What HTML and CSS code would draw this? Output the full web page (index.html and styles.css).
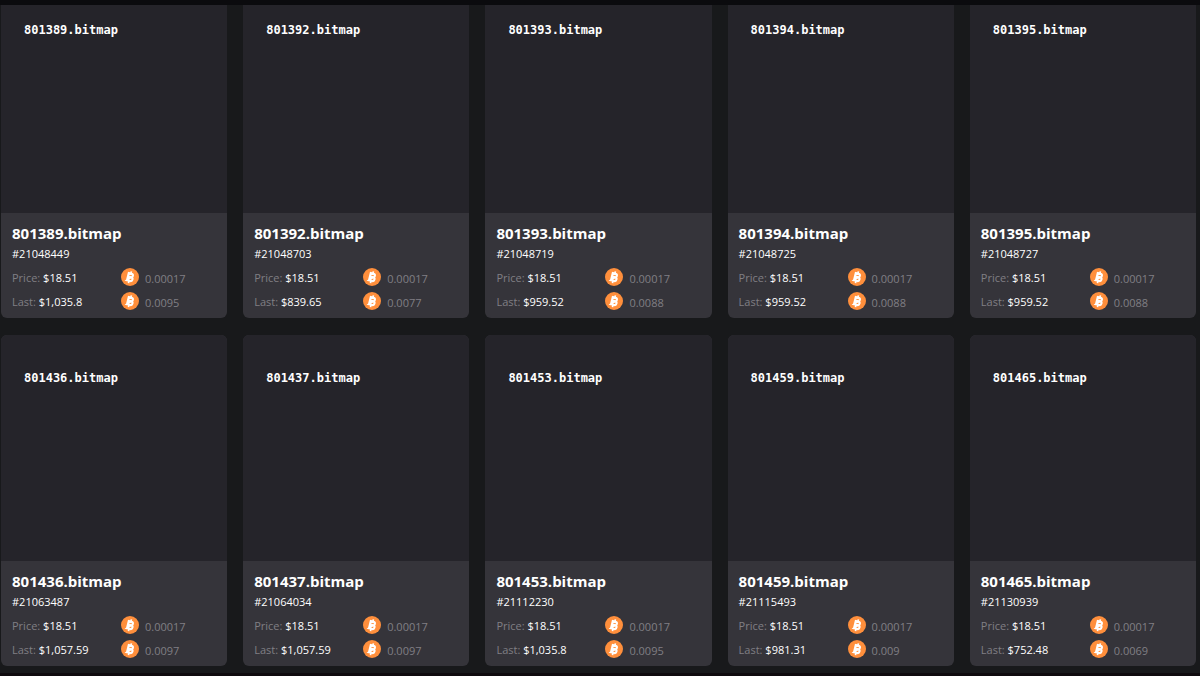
FILE: index.html
```html
<!DOCTYPE html>
<html lang="en">
<head>
  <meta charset="UTF-8">
  <meta name="viewport" content="width=device-width, initial-scale=1.0">
  <title>Bitmap Market</title>
  <link rel="stylesheet" href="styles.css">
</head>
<body>
  <header class="topbar"></header>

  <!-- Coin icon shared by all price rows -->
  <svg class="sprite" aria-hidden="true">
    <symbol id="btc" viewBox="0 0 34 34">
      <circle cx="17" cy="17" r="17" fill="#ff8f3c"/>
      <g transform="rotate(14 17 17)" fill="none" stroke="#fff">
        <path d="M13 10.500H18.500a3.100 3.100 0 0 1 0 6.400H13M19 16.900a3.600 3.600 0 0 1 0 7.400H13ZM13 8.500V26.300" stroke-width="4"/>
        <path d="M17 6V10M17 24.500V29" stroke-width="3.200"/>
      </g>
    </symbol>
  </svg>

  <main>
    <div id="market" class="grid"></div>
  </main>

<script>
  // name, inscription number, last price in USD, last price in BTC
  const items = [
    ['801389.bitmap', '21048449', '1,035.8', '0.0095'],
    ['801392.bitmap', '21048703', '839.65', '0.0077'],
    ['801393.bitmap', '21048719', '959.52', '0.0088'],
    ['801394.bitmap', '21048725', '959.52', '0.0088'],
    ['801395.bitmap', '21048727', '959.52', '0.0088'],
    ['801436.bitmap', '21063487', '1,057.59', '0.0097'],
    ['801437.bitmap', '21064034', '1,057.59', '0.0097'],
    ['801453.bitmap', '21112230', '1,035.8', '0.0095'],
    ['801459.bitmap', '21115493', '981.31', '0.009'],
    ['801465.bitmap', '21130939', '752.48', '0.0069']
  ];

  // One price row: USD on the left, BTC on the right
  function priceRow(label, usd, btc) {
    return `
      <div class="row">
        <span class="usd">${label}: <strong>$${usd}</strong></span>
        <span class="btc"><svg class="coin" aria-hidden="true"><use href="#btc"/></svg><span class="amount">${btc}</span></span>
      </div>`;
  }

  document.getElementById('market').innerHTML = items.map(([name, id, usd, btc]) => `
    <article class="card">
      <div class="preview">${name}</div>
      <div class="info">
        <h2>${name}</h2>
        <p class="number">#${id}</p>
        ${priceRow('Price', '18.51', '0.00017')}
        ${priceRow('Last', usd, btc)}
      </div>
    </article>`).join('');
</script>
</body>
</html>
```
FILE: styles.css
```css
body {
  margin: 0;
  background-color: #18191b;
  color: #fff;
  font-family: "Segoe UI", "Open Sans", "Noto Sans", sans-serif;
  font-size: 11px;
}

.sprite {
  display: none;
}

.topbar {
  height: 5px;
  background-color: #0b0b0e;
}

/* The list is scrolled a little way under the top bar */
main {
  overflow: hidden;
  padding: 0 4px 7px 1px;
  border-bottom: 4px solid #0f0b0e;
}

.grid {
  display: grid;
  grid-template-columns: repeat(5, 1fr);
  gap: 17px 16px;
  margin-top: -18px;
}

/* Cards */
.card {
  border-radius: 6px;
  overflow: hidden;
  background-color: #35343a;
}

.preview {
  box-sizing: border-box;
  aspect-ratio: 1;
  padding: 35px 23px;
  background-color: #25242a;
  font-family: Consolas, "DejaVu Sans Mono", monospace;
  font-size: 12px;
  font-weight: bold;
  line-height: 16px;
}

.info {
  padding: 10px 11px 5px;
}

h2 {
  margin: 0;
  font-size: 15px;
  font-weight: bold;
  line-height: 20px;
}

.number {
  margin: 0;
  line-height: 22px;
}

/* Price rows */
.row {
  display: grid;
  grid-template-columns: 109px 1fr;
  align-items: center;
  height: 24px;
  color: #807f84;
}

.usd strong {
  color: #fff;
  font-weight: 500;
}

.btc {
  display: flex;
  align-items: center;
  gap: 6px;
}

.amount {
  padding-top: 2px;
}

.coin {
  width: 18px;
  height: 18px;
}
```
